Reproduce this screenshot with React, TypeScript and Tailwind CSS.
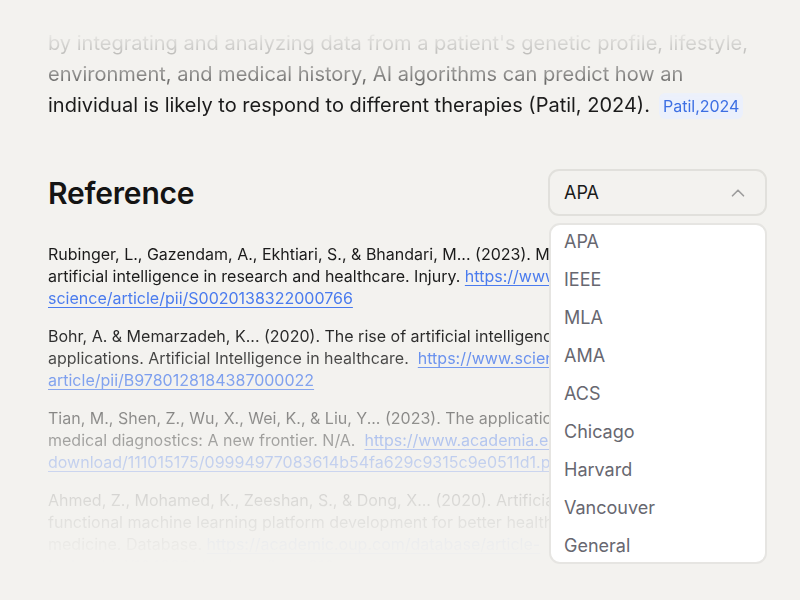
import React from 'react';
import { ChevronUp } from 'lucide-react';

const styles = ['APA', 'IEEE', 'MLA', 'AMA', 'ACS', 'Chicago', 'Harvard', 'Vancouver', 'General'];

const references = [
  {
    text: 'Rubinger, L., Gazendam, A., Ekhtiari, S., & Bhandari, M... (2023). Machine learning and artificial intelligence in research and healthcare. Injury. ',
    url: ['https://www.sciencedirect.com/', 'science/article/pii/S0020138322000766'],
  },
  {
    text: 'Bohr, A. & Memarzadeh, K... (2020). The rise of artificial intelligence in healthcare applications. Artificial Intelligence in healthcare.\u00a0 ',
    url: ['https://www.sciencedirect.com/science/', 'article/pii/B9780128184387000022'],
  },
  {
    text: 'Tian, M., Shen, Z., Wu, X., Wei, K., & Liu, Y... (2023). The application of artificial intelligence in medical diagnostics: A new frontier. N/A.\u00a0 ',
    url: ['https://www.academia.edu/', 'download/111015175/09994977083614b54fa629c9315c9e0511d1.pdf'],
  },
  {
    text: 'Ahmed, Z., Mohamed, K., Zeeshan, S., & Dong, X... (2020). Artificial intelligence with multi-functional machine learning platform development for better healthcare and precision medicine. Database. ',
    url: ['https://academic.oup.com/', 'database/article-lookup/doi/10.1093/database/baaa010'],
  },
];

export default function App() {
  return (
    <div className="h-[600px] w-[800px] overflow-hidden bg-[#f3f2ef] px-12 pt-[28px] font-['Inter',sans-serif] text-[#1b1b1b]">
      {/* Body paragraph, fading out toward the top */}
      <p className="text-[20px] leading-[31px] [mask-image:linear-gradient(to_bottom,rgba(0,0,0,0.06)_8px,rgba(0,0,0,0.42)_44px,black_72px)]">
        by integrating and analyzing data from a patient's genetic profile, lifestyle, environment, and medical history, AI algorithms can predict how an individual is likely to respond to different therapies (Patil, 2024).
        <span className="ml-[9px] inline-block rounded-md bg-[#ebf0fc] px-[4px] text-[16px] leading-[26px] text-[#3d6fe3]">Patil,2024</span>
      </p>

      {/* Section header with citation style picker */}
      <div className="-mr-[15px] mt-[48px] flex items-center justify-between">
        <h2 className="text-[30px] font-semibold leading-none tracking-[-0.2px] text-[#141414]">Reference</h2>
        <div className="relative w-[219px]">
          <button className="flex h-[47px] w-full items-center justify-between rounded-[11px] border-2 border-[#e1e0dc] bg-[#f3f2ef] pl-[14px] pr-[16px] text-[18px] text-[#1a1a1a]">
            <span>APA</span>
            <ChevronUp className="h-[22px] w-[22px] text-[#9c9c9c]" strokeWidth={1.8} />
          </button>
          <div className="absolute left-[1px] top-[54px] z-10 h-[341px] w-[218px] overflow-hidden rounded-[11px] border-2 border-[#e6e5e2] bg-white">
            <ul className="-mt-[3px]">
              {styles.map((s) => (
                <li key={s} className="flex h-[38px] items-center pl-[13px] text-[18px] text-[#676770]">
                  {s}
                </li>
              ))}
            </ul>
          </div>
        </div>
      </div>

      {/* Reference list, fading out toward the bottom */}
      <div className="-mr-[8px] mt-[27px] flex flex-col gap-4 text-[16px] leading-[22px] [mask-image:linear-gradient(to_bottom,black_80px,rgba(0,0,0,0.5)_170px,rgba(0,0,0,0.12)_255px,transparent_320px)]">
        {references.map((r, i) => (
          <p key={i}>
            {r.text}
            <a href="#" className="text-[#4a7bee] underline decoration-1 underline-offset-[3px]">
              {r.url[0]}
              <wbr />
              {r.url[1]}
            </a>
          </p>
        ))}
      </div>
    </div>
  );
}
